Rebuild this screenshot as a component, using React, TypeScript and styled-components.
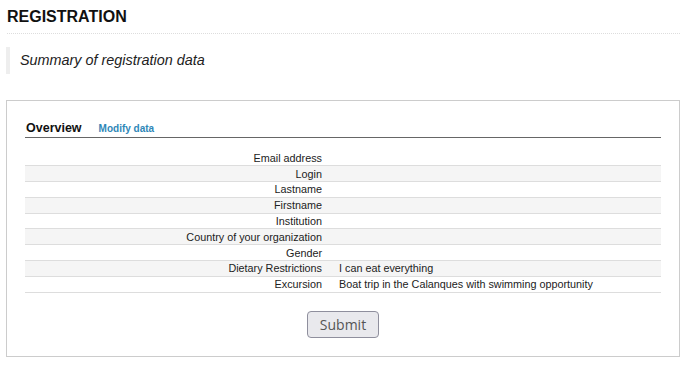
import React from "react";
import styled, { createGlobalStyle } from "styled-components";

const GlobalStyle = createGlobalStyle`
  html, body {
    margin: 0;
    padding: 0;
    background: #fff;
  }
  body {
    font-family: "Liberation Sans", Arial, sans-serif;
    color: #222;
  }
`;

const rows: { label: string; value: string }[] = [
  { label: "Email address", value: "" },
  { label: "Login", value: "" },
  { label: "Lastname", value: "" },
  { label: "Firstname", value: "" },
  { label: "Institution", value: "" },
  { label: "Country of your organization", value: "" },
  { label: "Gender", value: "" },
  { label: "Dietary Restrictions", value: "I can eat everything" },
  { label: "Excursion", value: "Boat trip in the Calanques with swimming opportunity" },
];

const App = () => {
  return (
    <Page>
      <GlobalStyle />
      <Title>REGISTRATION</Title>
      <Lead>Summary of registration data</Lead>
      <Panel>
        <PanelHeader>
          <h2>Overview</h2>
          <a href="#">Modify data</a>
        </PanelHeader>
        <Summary>
          <tbody>
            {rows.map((r) => (
              <tr key={r.label}>
                <th>{r.label}</th>
                <td>{r.value}</td>
              </tr>
            ))}
          </tbody>
        </Summary>
        <Actions>
          <SubmitButton type="button">Submit</SubmitButton>
        </Actions>
      </Panel>
    </Page>
  );
};

const Page = styled.div`
  padding: 0 1px 20px 6px;
`;

const Title = styled.h1`
  margin: 0 0 0 1px;
  padding: 8px 0 7px;
  font-size: 16px;
  line-height: 18px;
  font-weight: bold;
  color: #111;
  border-bottom: 1px dotted #ddd;
`;

const Lead = styled.blockquote`
  margin: 13px 0 0 0;
  padding: 0 0 0 10px;
  border-left: 4px solid #eee;
  font-size: 14.4px;
  line-height: 27px;
  font-style: italic;
  color: #222;
`;

const Panel = styled.section`
  margin-top: 26px;
  border: 1px solid #ccc;
  padding: 20px 18px 18px 18px;
`;

const PanelHeader = styled.div`
  display: flex;
  align-items: baseline;
  gap: 17px;
  padding: 0 0 1px 1px;
  border-bottom: 1px solid #666;

  h2 {
    margin: 0;
    font-size: 12.5px;
    line-height: 15px;
    font-weight: bold;
    color: #111;
  }

  a {
    font-size: 10px;
    font-weight: bold;
    color: #2f87b8;
    text-decoration: none;
  }
`;

const Summary = styled.table`
  width: 100%;
  margin-top: 12px;
  border-collapse: collapse;
  font-size: 10.8px;

  tr {
    height: 15.8px;
    border-bottom: 1px solid #ddd;
  }
  tr:nth-child(even) {
    background: #f5f5f5;
  }
  th,
  td {
    padding: 1px 0 0;
    line-height: 13px;
    font-weight: normal;
    color: #222;
    vertical-align: middle;
  }
  th {
    width: 305px;
    text-align: right;
    padding-right: 8px;
    box-sizing: border-box;
  }
  td {
    text-align: left;
    padding-left: 9px;
  }
`;

const Actions = styled.div`
  display: flex;
  justify-content: center;
  margin-top: 18px;
`;

const SubmitButton = styled.button`
  width: 72px;
  height: 27px;
  padding: 0;
  border: 1px solid #8f8f9d;
  border-radius: 4px;
  background: #e9e9ed;
  font-family: "Open Sans", "DejaVu Sans", sans-serif;
  font-size: 14px;
  color: #555;
  cursor: pointer;
`;

export default App;
